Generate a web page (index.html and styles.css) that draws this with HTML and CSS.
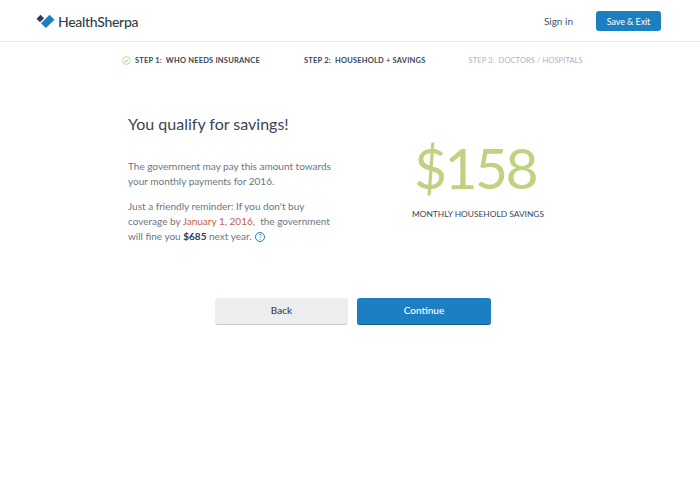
FILE: index.html
```html
<!DOCTYPE html>
<html lang="en">
<head>
    <meta charset="UTF-8">
    <meta name="viewport" content="width=device-width, initial-scale=1.0">
    <title>HealthSherpa</title>
    <link rel="stylesheet" href="styles.css">
</head>
<body>
    <header class="topbar">
        <div class="brand">
            <svg class="logo" width="19" height="15" viewBox="0 0 19 15">
                <path fill="#2e3f50" d="M0.5 4.8 L4.5 0.8 L8 4.3 L4 8.3 Z"/>
                <path fill="#1b7fc2" d="M13.5 0.8 L18.5 5.8 L9.8 14 L5 9.3 Z"/>
            </svg>
            <span class="brand-name">HealthSherpa</span>
        </div>
        <nav class="top-actions">
            <a class="sign-in">Sign in</a>
            <button class="save-exit">Save &amp; Exit</button>
        </nav>
    </header>

    <div class="steps">
        <div class="step step-done">
            <svg class="check" width="9" height="9" viewBox="0 0 9 9">
                <circle cx="4.5" cy="4.5" r="3.9" fill="none" stroke="#c3d488" stroke-width="0.9"/>
                <path d="M2.7 4.6 L4.1 5.9 L6.4 3.2" fill="none" stroke="#9fb35a" stroke-width="0.9"/>
            </svg>
            <span>STEP 1:&nbsp; WHO NEEDS INSURANCE</span>
        </div>
        <div class="step">STEP 2:&nbsp; HOUSEHOLD + SAVINGS</div>
        <div class="step step-todo">STEP 3:&nbsp; DOCTORS / HOSPITALS</div>
    </div>

    <main class="result">
        <section class="copy">
            <h1>You qualify for savings!</h1>
            <p>The government may pay this amount towards your monthly payments for 2016.</p>
            <p>Just a friendly reminder: If you don't buy coverage by <span class="date">January 1, 2016,</span>&nbsp; the government will fine you <strong>$685</strong> next year.
                <span class="help">?</span></p>
        </section>
        <section class="savings">
            <div class="amount">$158</div>
            <div class="amount-label">MONTHLY HOUSEHOLD SAVINGS</div>
        </section>
    </main>

    <div class="buttons">
        <button class="back">Back</button>
        <button class="continue">Continue</button>
    </div>
</body>
</html>
```

FILE: styles.css
```css
* {
    margin: 0;
    padding: 0;
    box-sizing: border-box;
    font-family: Lato, "Open Sans", sans-serif;
}

body {
    background-color: #fff;
    color: #2e3a4a;
}

.topbar {
    display: flex;
    justify-content: space-between;
    align-items: center;
    height: 42px;
    padding: 1px 39px 0 36px;
    border-bottom: 1px solid #e6e7e8;
}

.brand {
    display: flex;
    align-items: center;
    gap: 3px;
    margin-top: 1px;
}

.brand-name {
    font-size: 14px;
    font-weight: 500;
    letter-spacing: -0.3px;
    color: #2e3f50;
}

.top-actions {
    display: flex;
    align-items: center;
    gap: 23px;
}

.sign-in {
    font-size: 10px;
    color: #4a5361;
}

button {
    border: none;
    cursor: pointer;
}

.save-exit {
    width: 65px;
    height: 20px;
    font-size: 9px;
    letter-spacing: -0.1px;
    color: #fff;
    background-color: #1b7fc2;
    border-radius: 3px;
}

.steps {
    display: flex;
    align-items: center;
    height: 36px;
    padding-left: 122px;
    font-size: 7.5px;
    font-weight: 700;
    letter-spacing: 0.2px;
    color: #3a4554;
}

.step {
    display: flex;
    align-items: center;
    margin-right: 43px;
}

.step-done {
    margin-right: 44px;
}

.step-done .check {
    margin-right: 4px;
}

.step-todo {
    color: #aeb2b8;
    font-weight: 400;
    letter-spacing: 0.1px;
}

.result {
    display: flex;
    padding: 36px 0 0 128px;
}

.copy {
    width: 212px;
    font-size: 10px;
    line-height: 15px;
    color: #6d7580;
}

.copy h1 {
    font-size: 16px;
    line-height: 20px;
    font-weight: 400;
    color: #3a4452;
    margin-bottom: 25px;
}

.copy p {
    margin-bottom: 10px;
}

.copy strong {
    color: #2e3a4a;
}

.date {
    color: #c0604a;
}

.help {
    display: inline-block;
    width: 10px;
    height: 10px;
    margin-left: 1px;
    border: 1px solid #1b7fc2;
    border-radius: 50%;
    font-size: 7px;
    line-height: 8px;
    text-align: center;
    vertical-align: 0;
    color: #1b7fc2;
}

.savings {
    width: 220px;
    margin-left: 28px;
    padding-top: 25px;
    text-align: center;
}

.amount {
    margin-right: 6px;
    font-size: 57px;
    line-height: 57px;
    letter-spacing: -2.5px;
    color: #bfd27f;
}

.amount-label {
    margin-top: 13px;
    font-size: 8.4px;
    color: #3a4554;
}

.buttons {
    display: flex;
    gap: 9px;
    margin-top: 44px;
    padding-left: 215px;
}

.buttons button {
    height: 27px;
    padding-bottom: 2px;
    font-size: 10px;
    font-weight: 500;
    border-radius: 3px;
}

.back {
    width: 133px;
    background-color: #ecedee;
    color: #3a3f47;
    border-bottom: 1px solid #c9cacc;
}

.continue {
    width: 134px;
    background-color: #1b7fc2;
    color: #fff;
    border-bottom: 1px solid #12609a;
}
```
